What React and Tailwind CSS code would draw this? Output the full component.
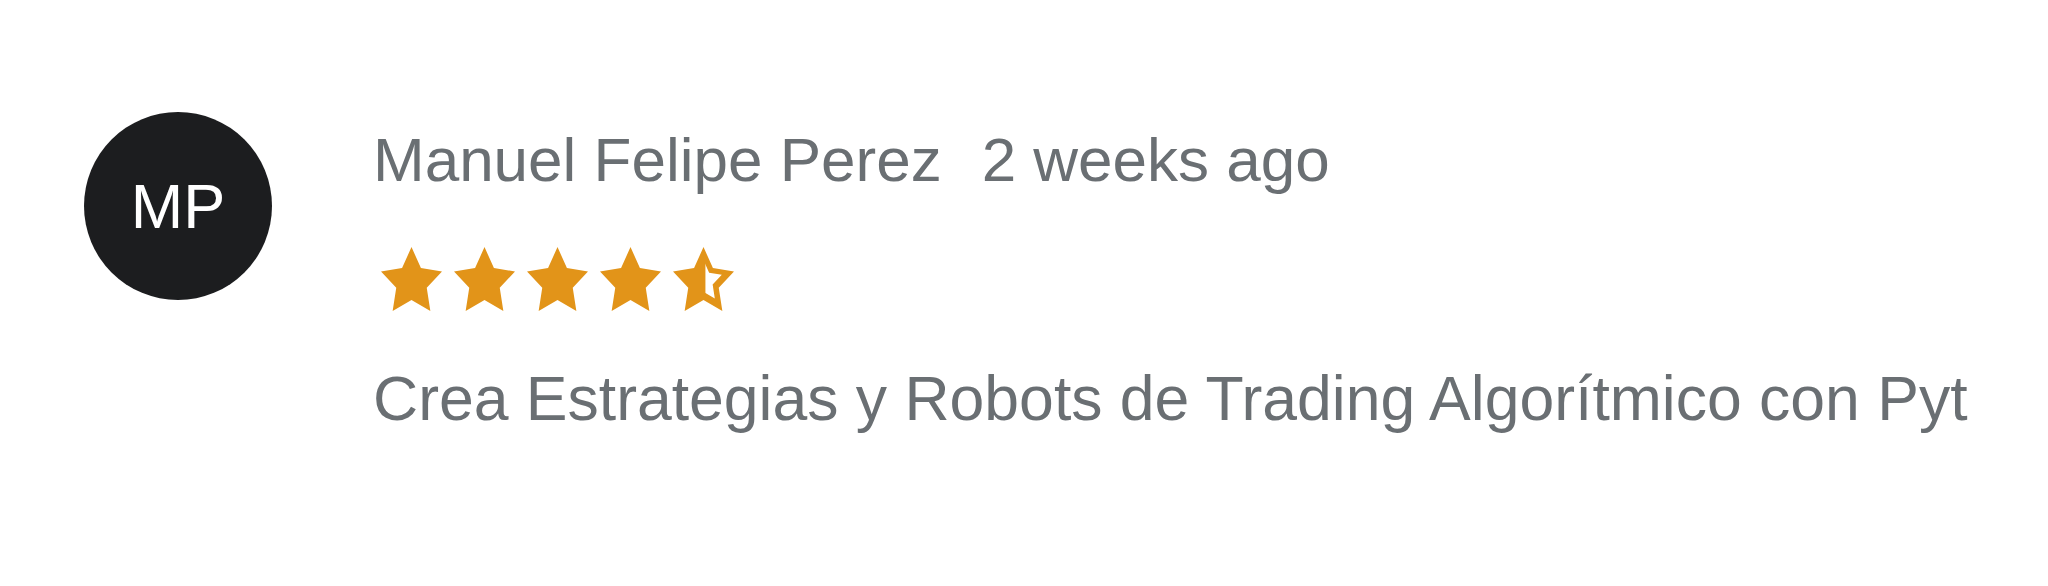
import React from 'react';

// Five-point star, inner radius half the outer one (fat arms)
const STAR =
  'M0 -10 L2.939 -4.045 L9.511 -3.09 L4.755 1.545 L5.878 8.09 L0 5 L-5.878 8.09 L-4.755 1.545 L-9.511 -3.09 L-2.939 -4.045 Z';

const Star = ({ half }) => (
  <svg
    viewBox="-9.511 -10 19.022 18.09"
    preserveAspectRatio="none"
    className="w-[61px] h-[64px] shrink-0"
  >
    {half && (
      <defs>
        <clipPath id="right-half">
          <rect x="0.6" y="-11" width="11" height="21" />
        </clipPath>
      </defs>
    )}
    <path d={STAR} fill="#e29419" />
    {half && (
      <g clipPath="url(#right-half)">
        <path d={STAR} fill="#ffffff" transform="translate(0 -0.3) scale(0.6)" />
      </g>
    )}
  </svg>
);

const review = {
  initials: 'MP',
  name: 'Manuel Felipe Perez',
  date: '2 weeks ago',
  course: 'Crea Estrategias y Robots de Trading Algorítmico con Pyt',
};

const App = () => {
  return (
    <div className="min-h-screen bg-white font-['Liberation_Sans',Arial,sans-serif] text-[#6a6f73] antialiased">
      <div className="flex items-start pl-[84px] pt-[112px]">
        {/* Avatar */}
        <div className="w-[188px] h-[188px] shrink-0 rounded-full bg-[#1c1d1f] flex items-center justify-center">
          <span className="text-white text-[63px] leading-none">{review.initials}</span>
        </div>

        {/* Review body */}
        <div className="ml-[101px] pt-[17px] flex flex-col">
          <div className="flex items-baseline text-[62px] leading-none whitespace-nowrap">
            <span>{review.name}</span>
            <span className="ml-[40px]">{review.date}</span>
          </div>

          <div className="flex gap-[12px] mt-[56px] ml-[8px]">
            {[1, 2, 3, 4].map((i) => (
              <Star key={i} />
            ))}
            <Star half />
          </div>

          <p className="mt-[56px] text-[62.5px] leading-none whitespace-nowrap">{review.course}</p>
        </div>
      </div>
    </div>
  );
};

export default App;
